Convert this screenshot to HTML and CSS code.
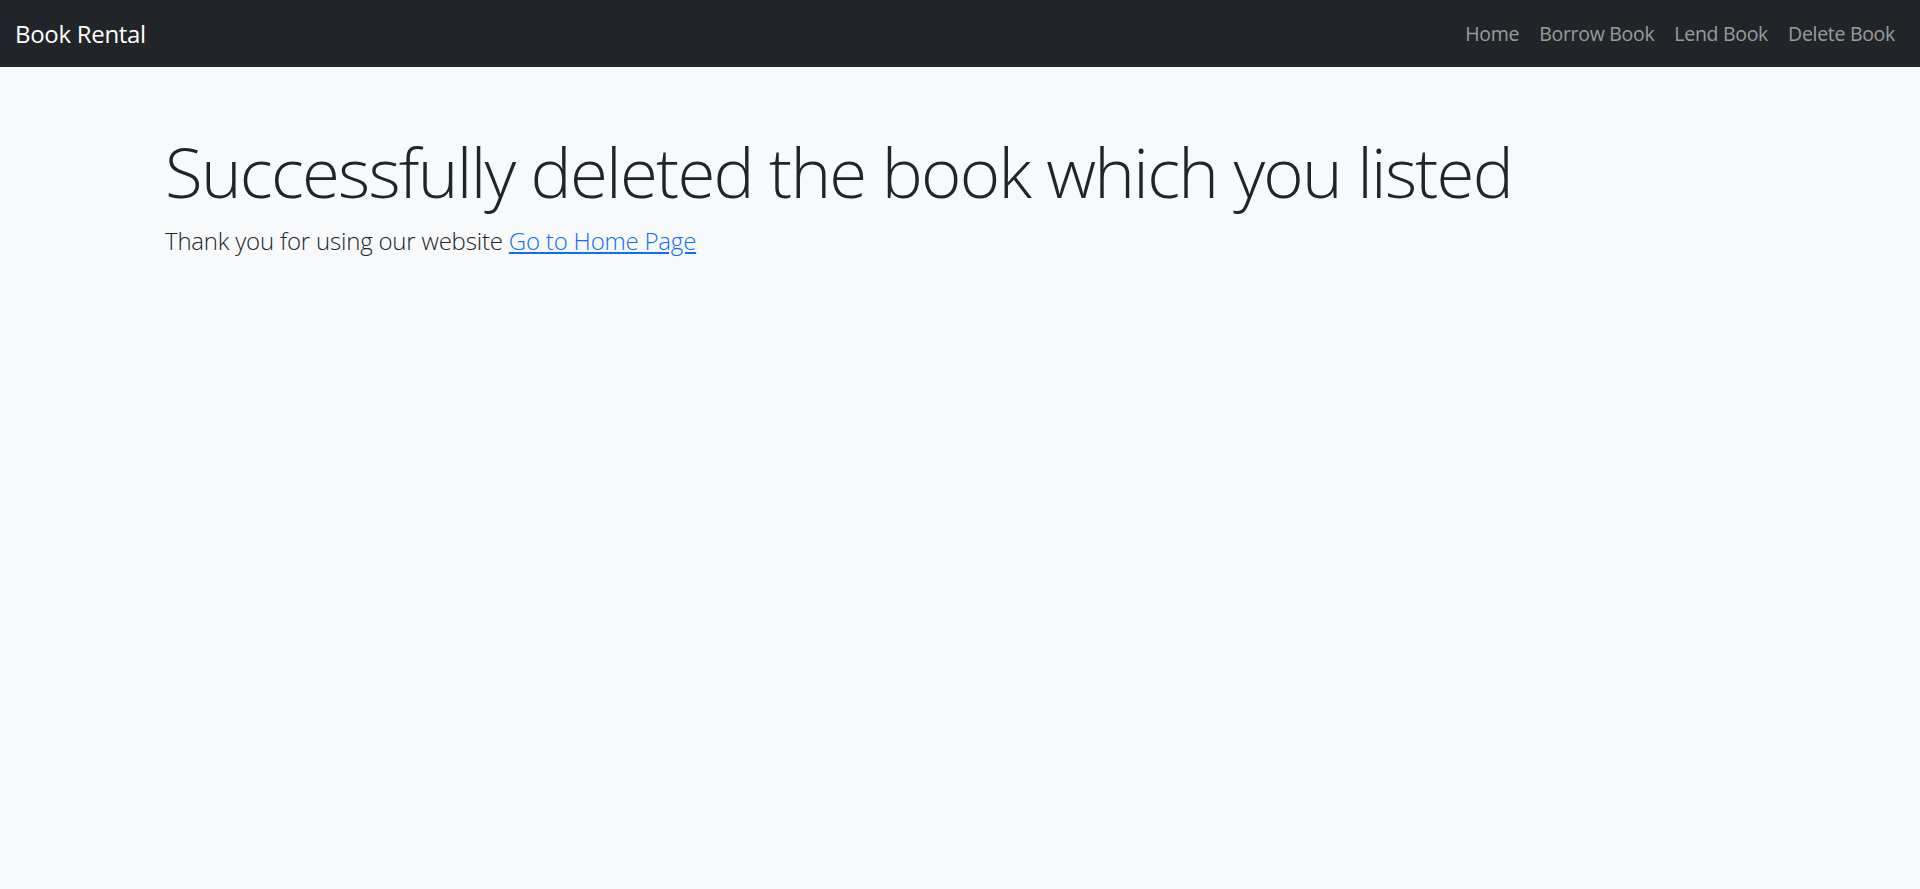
FILE: index.html
```html
<!DOCTYPE html>
<html lang="en">
<head>
<meta charset="utf-8">
<title>Book Rental</title>
<link rel="stylesheet" href="styles.css">
</head>
<body>
<nav class="navbar">
  <a class="brand" href="#">Book Rental</a>
  <ul class="nav-links">
    <li><a href="#">Home</a></li>
    <li><a href="#">Borrow Book</a></li>
    <li><a href="#">Lend Book</a></li>
    <li><a href="#">Delete Book</a></li>
  </ul>
</nav>
<main class="content">
  <h1 class="display">Successfully deleted the book which you listed</h1>
  <p class="lead">Thank you for using our website <a href="#">Go to Home Page</a></p>
</main>
</body>
</html>
```
FILE: styles.css
```css
html, body {
  margin: 0;
  padding: 0;
}
body {
  background: #f8f9fa;
  color: #212529;
  font-family: "Open Sans", "Noto Sans", sans-serif;
  height: 889px;
  overflow: hidden;
}
.navbar {
  background: #212529;
  height: 67px;
  display: flex;
  align-items: center;
  justify-content: space-between;
  padding: 0 15px 0 15px;
  box-sizing: border-box;
}
.brand {
  color: #fff;
  text-decoration: none;
  font-size: 24px;
  font-weight: 400;
  letter-spacing: -0.3px;
}
.nav-links {
  list-style: none;
  margin: 0;
  padding: 0;
  display: flex;
}
.nav-links a {
  display: block;
  padding: 0 10px;
  color: rgba(255,255,255,.55);
  text-decoration: none;
  font-size: 19.5px;
  letter-spacing: -0.3px;
}
.content {
  padding: 0 0 0 165px;
}
.display {
  margin: 63px 0 0 0;
  font-size: 69px;
  font-weight: 300;
  line-height: 1.2;
  letter-spacing: -1.75px;
}
.lead {
  margin: 10px 0 0 0;
  font-size: 24px;
  font-weight: 300;
  line-height: 1.5;
  letter-spacing: -0.2px;
}
.lead a {
  color: #0d6efd;
}
```
